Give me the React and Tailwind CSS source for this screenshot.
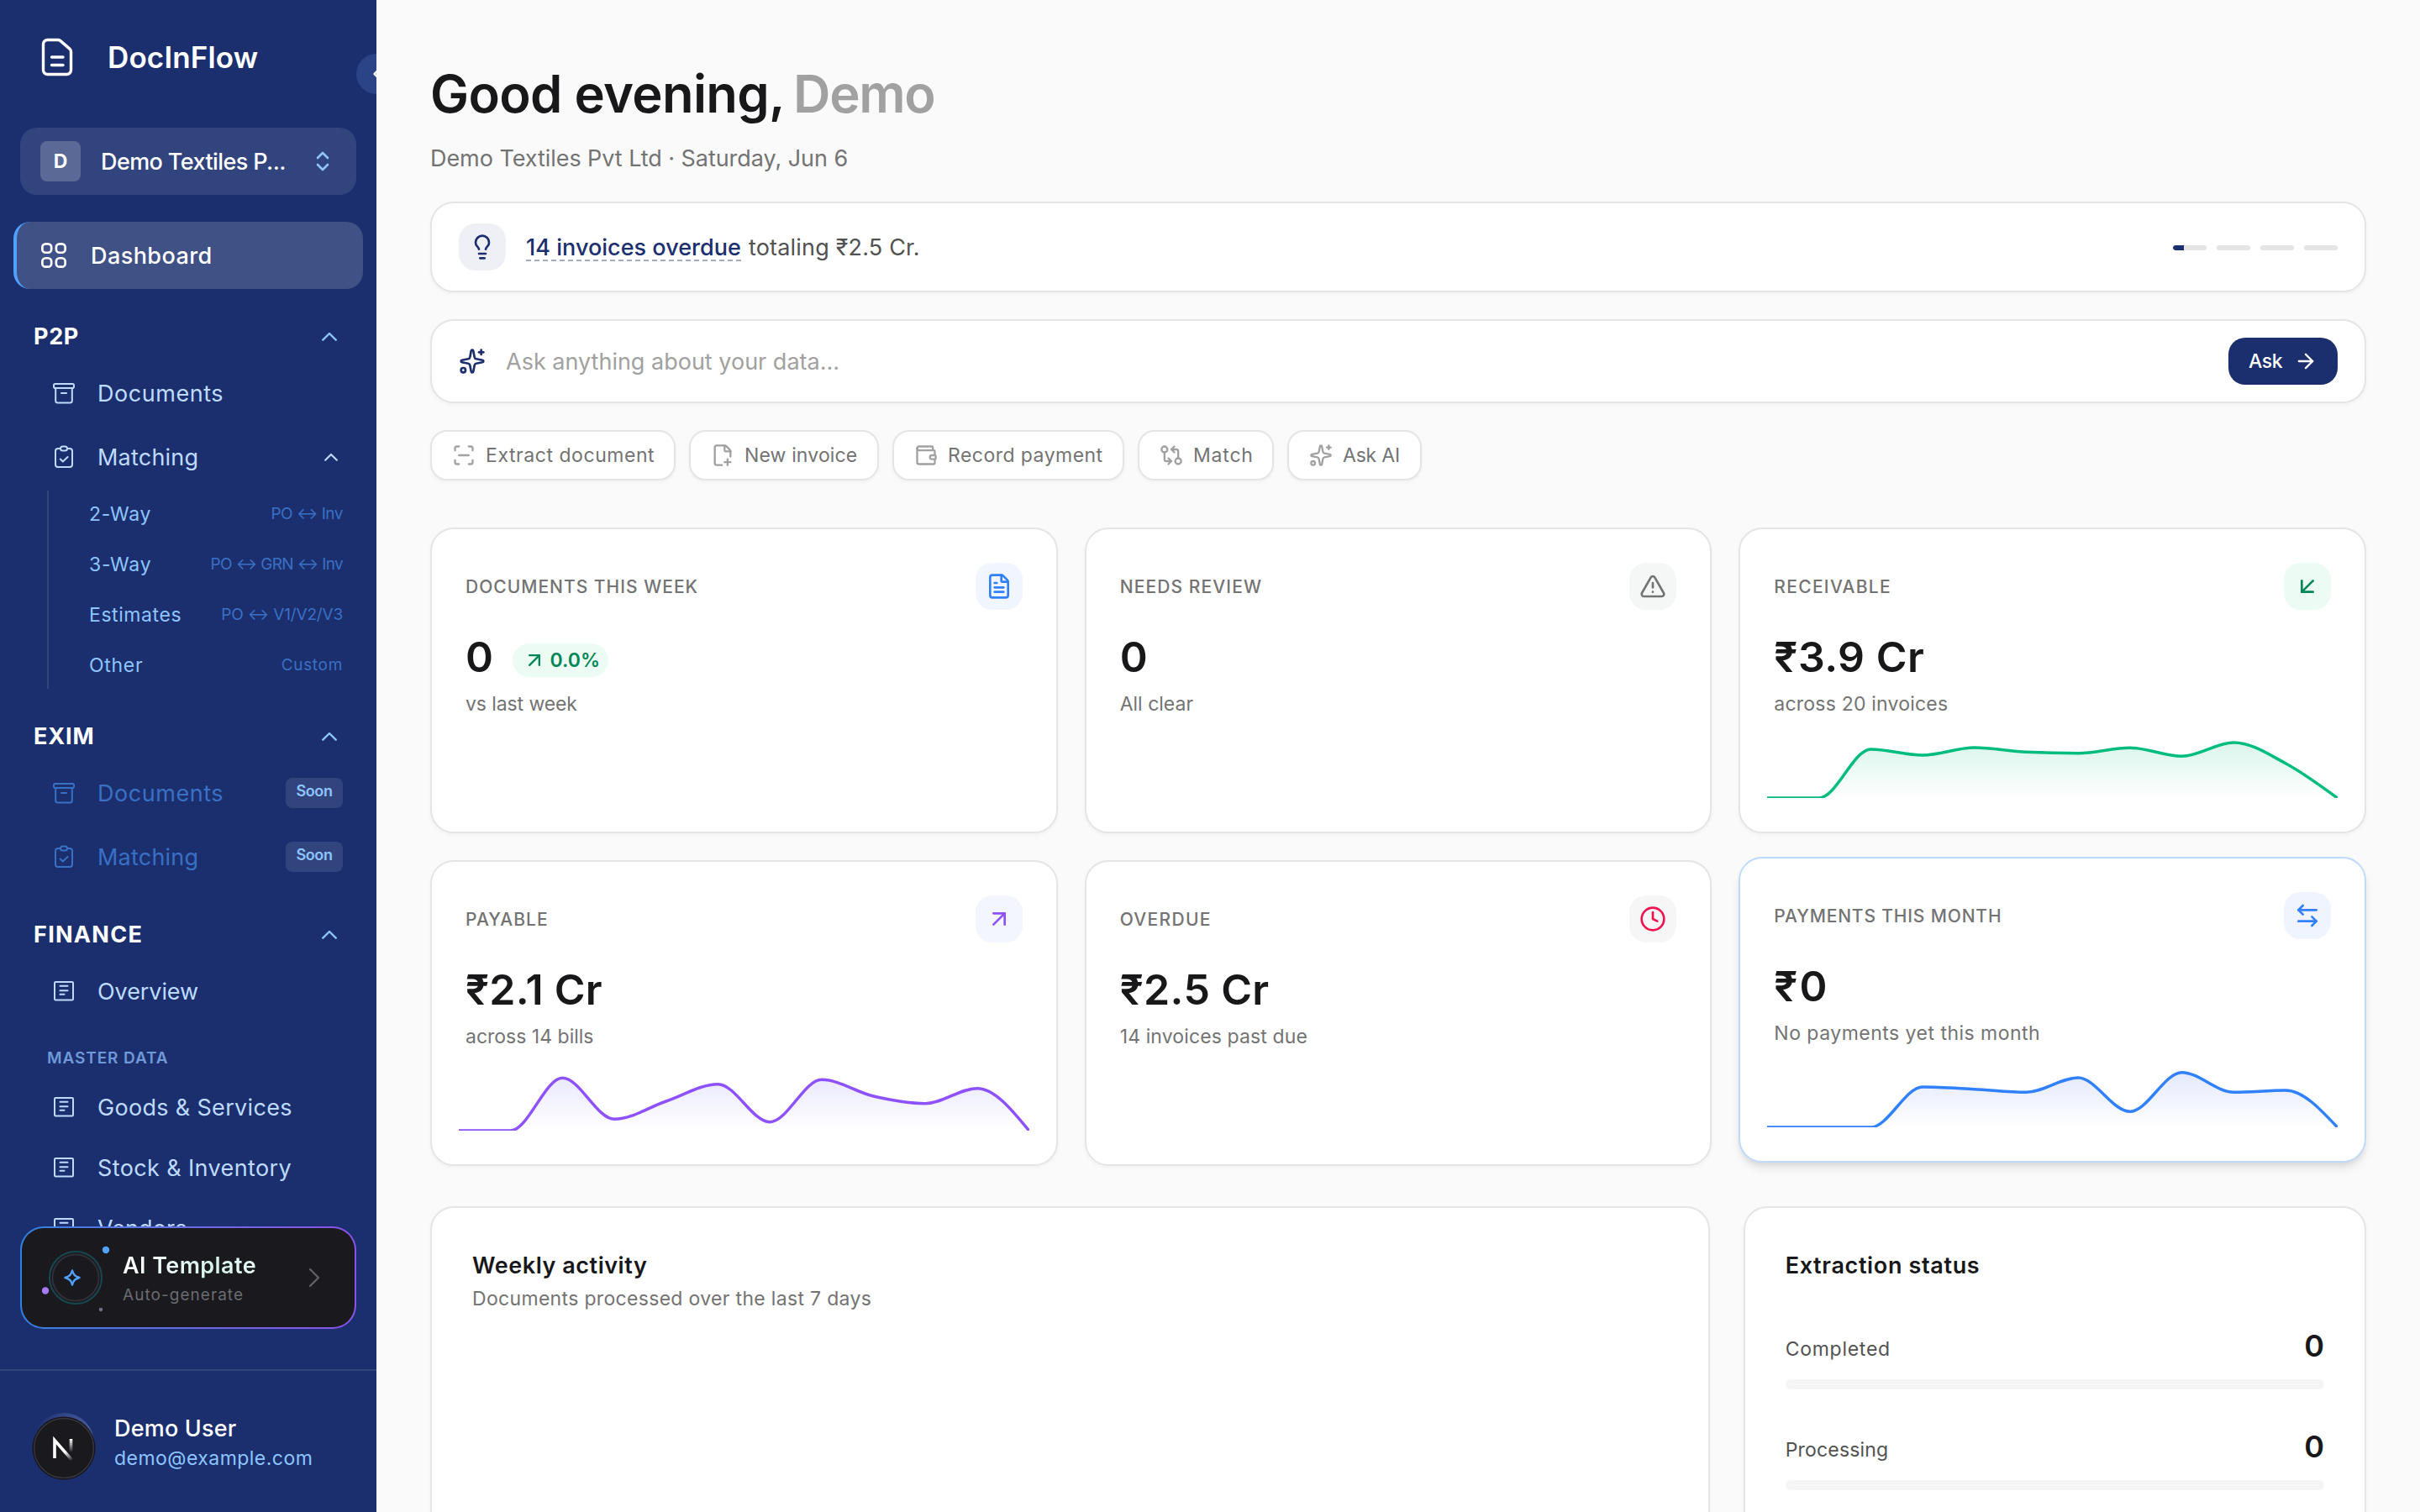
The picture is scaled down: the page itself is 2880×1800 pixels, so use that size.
import React from "react";
import {
  ArrowDownLeft,
  ArrowLeftRight,
  ArrowRight,
  ArrowUpRight,
  ChevronLeft,
  Clock,
  FileText,
  GitCompareArrows,
  Lightbulb,
  ScanLine,
  Sparkles,
  TriangleAlert,
  Wallet,
} from "lucide-react";

function LogoIcon() {
  return (
    <svg width="40" height="48" viewBox="0 0 40 48" fill="none" stroke="currentColor" strokeWidth="3.4" strokeLinecap="round" strokeLinejoin="round">
      <path d="M3.5 8.5a5 5 0 0 1 5-5h12.5a4 4 0 0 1 2.6.9l11.6 10a4 4 0 0 1 1.3 3V39.500a5 5 0 0 1-5 5h-23a5 5 0 0 1-5-5z" />
      <path d="M13.500 24h13.500M13.500 33.500h13.500" />
    </svg>
  );
}

function GridIcon() {
  return (
    <svg width="32" height="32" viewBox="0 0 32 32" fill="none" stroke="currentColor" strokeWidth="2.700">
      <rect x="2.350" y="2.350" width="10.800" height="10.400" rx="4" />
      <rect x="18.850" y="2.350" width="10.800" height="10.400" rx="4" />
      <rect x="2.350" y="19.250" width="10.800" height="10.400" rx="4" />
      <rect x="18.850" y="19.250" width="10.800" height="10.400" rx="4" />
    </svg>
  );
}

function ArchiveIcon() {
  return (
    <svg width="28" height="28" viewBox="0 0 28 28" fill="none" stroke="currentColor" strokeWidth="2" strokeLinecap="round" strokeLinejoin="round">
      <rect x="2" y="3" width="24" height="5" rx="1.800" />
      <path d="M4.200 8v15a2.500 2.500 0 0 0 2.500 2.500h14.600a2.500 2.500 0 0 0 2.500-2.500V8" />
      <path d="M11 14h6" />
    </svg>
  );
}

function ClipboardIcon() {
  return (
    <svg width="28" height="28" viewBox="0 0 28 28" fill="none" stroke="currentColor" strokeWidth="2" strokeLinecap="round" strokeLinejoin="round">
      <path d="M10 4H7a3 3 0 0 0-3 3v16a3 3 0 0 0 3 3h14a3 3 0 0 0 3-3V7a3 3 0 0 0-3-3h-3" />
      <rect x="10" y="1.500" width="8" height="5" rx="2.500" />
      <path d="m9.800 16.500 3 3 5.800-5.500" />
    </svg>
  );
}

function ListBoxIcon() {
  return (
    <svg width="28" height="28" viewBox="0 0 28 28" fill="none" stroke="currentColor" strokeWidth="2" strokeLinecap="round">
      <rect x="3" y="3" width="22" height="21.500" rx="1.200" />
      <path d="M9.500 7.800h9M9.500 13.200h9M9.500 17.800h5" />
    </svg>
  );
}

function ChevronUp({ className }) {
  return (
    <svg className={className} viewBox="0 0 18 11" fill="none" stroke="currentColor" strokeWidth="2.400" strokeLinecap="round" strokeLinejoin="round">
      <path d="M1.300 9.700 9 2l7.700 7.700" />
    </svg>
  );
}

function SortIcon() {
  return (
    <svg width="16" height="24" viewBox="0 0 16 24" fill="none" stroke="currentColor" strokeWidth="2.600" strokeLinecap="round" strokeLinejoin="round">
      <path d="m2 8 6-6 6 6M2 16l6 6 6-6" />
    </svg>
  );
}

function FilePlusIcon() {
  return (
    <svg width="28" height="28" viewBox="0 0 24 24" fill="none" stroke="currentColor" strokeWidth="2" strokeLinecap="round" strokeLinejoin="round">
      <path d="M11.350 22H6a2 2 0 0 1-2-2V4a2 2 0 0 1 2-2h8a2.400 2.400 0 0 1 1.706.706l3.588 3.588A2.400 2.400 0 0 1 20 8v5.350" />
      <path d="M14 2v5a1 1 0 0 0 1 1h5M14 19h6M17 16v6" />
    </svg>
  );
}

function SectionHeader({ title, className }) {
  return (
    <div className={`flex h-14 shrink-0 items-center justify-between pl-10 pr-[47px] ${className}`}>
      <span className="pt-0.5 text-[27px] font-bold text-white">{title}</span>
      <ChevronUp className="h-[11px] w-[18px] text-[#8ec5ff]" />
    </div>
  );
}

function NavItem({ icon, label, className, children }) {
  return (
    <div className={`flex shrink-0 items-center pl-[62px] pr-10 text-[27px] ${className}`}>
      {icon}
      <span className="ml-[26px] grow pt-0.5">{label}</span>
      {children}
    </div>
  );
}

function SoonBadge() {
  return (
    <span className="flex h-9 w-[68px] justify-center rounded-lg bg-white/10 pt-1 text-[18px] font-semibold leading-6 tracking-[-0.020em] text-[#8ec5ff]">
      Soon
    </span>
  );
}

const MATCH_MODES = [
  { name: "2-Way", hint: "PO ↔ Inv", tracking: "tracking-[0.032em]", hintTracking: "tracking-[-0.026em]" },
  { name: "3-Way", hint: "PO ↔ GRN ↔ Inv", tracking: "tracking-[0.032em]", hintTracking: "tracking-[-0.034em]" },
  { name: "Estimates", hint: "PO ↔ V1/V2/V3", tracking: "tracking-[0.025em]", hintTracking: "tracking-[-0.009em]" },
  { name: "Other", hint: "Custom", tracking: "tracking-[0.030em]", hintTracking: "tracking-[0.036em]" },
];

function Sidebar() {
  return (
    <aside className="relative flex h-[1800px] w-[448px] shrink-0 flex-col overflow-hidden bg-[#1b2f6e]">
      <div className="flex h-[136px] shrink-0 items-center pl-12 text-white">
        <LogoIcon />
        <span className="ml-[40px] text-[35px] font-semibold tracking-[0.004em]">DocInFlow</span>
      </div>
      <div className="absolute left-[424px] top-16 flex h-12 w-12 items-center justify-center rounded-full bg-[#2b4488] text-white">
        <ChevronLeft size={20} strokeWidth={2.800} />
      </div>

      <div className="mx-6 mt-4 flex h-20 shrink-0 items-center rounded-[20px] bg-white/10 pl-6 pr-8">
        <span className="flex h-12 w-12 items-center justify-center rounded-lg bg-white/20 text-[23px] font-bold text-white">D</span>
        <span className="ml-6 grow whitespace-nowrap pt-0.5 text-[27px] font-medium tracking-[-0.022em] text-white">Demo Textiles P...</span>
        <span className="text-[#8ec5ff]"><SortIcon /></span>
      </div>

      <nav className="mt-8 flex min-h-0 flex-1 flex-col overflow-hidden">
        <div className="mx-4 flex h-20 shrink-0 items-center rounded-[20px] border-l-4 border-[#51a2ff] bg-white/[0.165] pl-7 text-white">
          <GridIcon />
          <span className="ml-[28px] pt-0.5 text-[27px] font-medium tracking-[0.016em]">Dashboard</span>
        </div>

        <SectionHeader title="P2P" className="mt-7 tracking-[0.040em]" />
        <NavItem icon={<ArchiveIcon />} label="Documents" className="mt-0.5 h-[76px] tracking-[0.020em] text-[#bedbff]" />
        <NavItem icon={<ClipboardIcon />} label="Matching" className="h-[76px] tracking-[0.008em] text-[#bedbff]">
          <ChevronUp className="mr-1.5 h-[10px] w-4" />
        </NavItem>
        <div className="ml-14 mr-10 mt-0.5 flex shrink-0 flex-col gap-1 border-l-2 border-white/10 pl-12">
          {MATCH_MODES.map((m) => (
            <div key={m.name} className="flex h-14 items-center justify-between whitespace-nowrap">
              <span className={`text-[23px] text-[#8ec5ff] ${m.tracking}`}>{m.name}</span>
              <span className={`text-[19px] text-[#3a70c4] ${m.hintTracking}`}>{m.hint}</span>
            </div>
          ))}
        </div>

        <SectionHeader title="EXIM" className="mt-7 tracking-[0.055em]" />
        <NavItem icon={<ArchiveIcon />} label="Documents" className="mt-0.5 h-[76px] tracking-[0.020em] text-[#3a70c4]">
          <SoonBadge />
        </NavItem>
        <NavItem icon={<ClipboardIcon />} label="Matching" className="h-[76px] tracking-[0.008em] text-[#3a70c4]">
          <SoonBadge />
        </NavItem>

        <SectionHeader title="FINANCE" className="mt-[26px] tracking-[0.080em]" />
        <NavItem icon={<ListBoxIcon />} label="Overview" className="mt-0.5 h-[76px] tracking-[-0.003em] text-[#bedbff]" />
        <div className="mb-0.5 mt-[22px] flex h-10 shrink-0 items-center pl-14 text-[19px] font-semibold tracking-[0.048em] text-[#6f99d8]">
          MASTER DATA
        </div>
        <NavItem icon={<ListBoxIcon />} label="Goods & Services" className="h-[72px] tracking-[0.012em] text-[#bedbff]" />
        <NavItem icon={<ListBoxIcon />} label="Stock & Inventory" className="h-[72px] tracking-[0.014em] text-[#bedbff]" />
        <NavItem icon={<ListBoxIcon />} label="Vendors" className="h-[72px] tracking-[0.002em] text-[#bedbff]" />
      </nav>

      <div className="mx-6 h-[122px] shrink-0 rounded-[28px] bg-gradient-to-r from-[#3080e0] to-[#8a52e8] p-[2px]">
        <div className="flex h-full items-center rounded-[26px] bg-[#19191e] pl-6 pr-[41px]">
          <svg width="84" height="84" viewBox="0 0 84 84" fill="none">
            <circle cx="40" cy="42" r="31" stroke="#17484f" strokeWidth="2" />
            <circle cx="40" cy="42" r="27.500" stroke="#2f2f3a" strokeWidth="2" />
            <path d="M36 33.500c1.400 5 3.200 7 8.500 8.500-5.300 1.500-7.100 3.500-8.500 8.500-1.400-5-3.200-7-8.500-8.500 5.300-1.500 7.100-3.500 8.500-8.500z" stroke="#51a2ff" strokeWidth="2.400" strokeLinejoin="round" />
            <circle cx="76" cy="9" r="4.200" fill="#51a2ff" />
            <circle cx="4" cy="57.500" r="4.200" fill="#a47af5" />
            <circle cx="70" cy="80" r="2.200" fill="#6d7480" />
          </svg>
          <div className="ml-[12px] flex grow flex-col whitespace-nowrap pt-1.5">
            <span className="h-[34px] bg-gradient-to-r from-white via-[#d6f5ea] to-white bg-clip-text text-[27px] font-semibold leading-[34px] tracking-[0.015em] text-transparent">
              AI Template
            </span>
            <span className="h-[34px] text-[19px] leading-[36px] tracking-[0.055em] text-[#6b6b70]">Auto-generate</span>
          </div>
          <svg width="14" height="24" viewBox="0 0 14 24" fill="none" stroke="#606065" strokeWidth="2.400" strokeLinecap="round" strokeLinejoin="round">
            <path d="m2 2 10 10L2 22" />
          </svg>
        </div>
      </div>

      <div className="mt-12 flex h-[170px] shrink-0 items-center border-t-2 border-[#30437c] pl-10">
        <div className="relative mt-1 h-[72px] w-[72px] rounded-full bg-gradient-to-r from-[#1b2f6e] to-[#4a5ca0]">
          <svg className="absolute -left-0.5 top-1" width="76" height="76" viewBox="0 0 76 76" fill="none">
            <defs>
              <linearGradient id="diag" x1="34" y1="30" x2="49" y2="52" gradientUnits="userSpaceOnUse">
                <stop offset="0.500" stopColor="#fff" />
                <stop offset="1" stopColor="#fff" stopOpacity="0" />
              </linearGradient>
              <linearGradient id="stem" x1="46" y1="27" x2="46" y2="43" gradientUnits="userSpaceOnUse">
                <stop offset="0" stopColor="#fff" />
                <stop offset="1" stopColor="#fff" stopOpacity="0" />
              </linearGradient>
            </defs>
            <circle cx="38" cy="38" r="37.500" fill="#131316" />
            <circle cx="38" cy="38" r="35.500" fill="#1a1a1e" stroke="#35353c" strokeWidth="1.500" />
            <path d="M27 50V28.500L47.500 52" stroke="url(#diag)" strokeWidth="3.600" />
            <path d="M46.500 27v17" stroke="url(#stem)" strokeWidth="3.600" />
          </svg>
        </div>
        <div className="ml-6 flex flex-col whitespace-nowrap pt-1.5">
          <span className="h-9 text-[27px] font-medium leading-9 tracking-[0.007em] text-white">Demo User</span>
          <span className="h-9 text-[23px] leading-[35px] tracking-[0.020em] text-[#8ec5ff]">demo@example.com</span>
        </div>
      </div>
    </aside>
  );
}

/* Smooth path through evenly spaced points, without overshoot between them. */
function monotonePath(ys, width) {
  const h = width / (ys.length - 1);
  const d = ys.slice(1).map((y, i) => (y - ys[i]) / h);
  const last = ys.length - 1;
  const m = ys.map((_, i) => {
    if (i === 0 || i === last) return 0;
    const a = d[i - 1];
    const b = d[i];
    if (a * b <= 0) return 0;
    return Math.sign(a) * 2 * Math.min(Math.abs(a), Math.abs(b), Math.abs(a + b) / 4);
  });
  m[0] = (3 * d[0] - m[1]) / 2;
  m[last] = (3 * d[last - 1] - m[last - 1]) / 2;
  let path = `M0 ${ys[0]}`;
  for (let i = 0; i < last; i++) {
    const x0 = i * h;
    const x1 = x0 + h;
    path += `C${x0 + h / 3} ${ys[i] + (m[i] * h) / 3} ${x1 - h / 3} ${ys[i + 1] - (m[i + 1] * h) / 3} ${x1} ${ys[i + 1]}`;
  }
  return path;
}

function Sparkline({ id, points, color, fill }) {
  const width = 678.667;
  const line = monotonePath(points, width);
  return (
    <svg className="-mx-2 mt-6 block h-[72px] w-[calc(100%+16px)]" viewBox={`0 0 ${width} 72`} preserveAspectRatio="none" fill="none">
      <defs>
        <linearGradient id={id} x1="0" y1="0" x2="0" y2="72" gradientUnits="userSpaceOnUse">
          <stop offset="0" stopColor={fill} stopOpacity="0.160" />
          <stop offset="1" stopColor={fill} stopOpacity="0" />
        </linearGradient>
      </defs>
      <path d={`${line}L${width} 72L0 72Z`} fill={`url(#${id})`} />
      <path d={line} stroke={color} strokeWidth="3.500" />
    </svg>
  );
}

function StatCard({ label, labelTracking, value, valueTracking, sub, subTracking, icon, iconBox, badge, chart, highlighted }) {
  return (
    <div
      className={`h-[364px] rounded-[28px] border-2 bg-white p-10 ${
        highlighted
          ? "-translate-y-1 border-[#bedbff] shadow-[0_8px_12px_-2px_rgba(0,0,0,0.1),0_4px_8px_-4px_rgba(0,0,0,0.1)]"
          : "border-[#e5e5e5] shadow-[0_2px_4px_rgba(0,0,0,0.04)]"
      }`}
    >
      <div className="flex h-14 items-center justify-between">
        <span className={`pt-0.5 text-[21px] font-medium text-[#737373] ${labelTracking}`}>{label}</span>
        <span className={`flex h-14 w-14 items-center justify-center rounded-[20px] ${iconBox}`}>{icon}</span>
      </div>
      <div className="mt-7 flex h-14 items-center gap-[22px]">
        <span className={`text-[50px] font-semibold leading-[56px] text-[#18181b] ${valueTracking}`}>{value}</span>
        {badge}
      </div>
      <div className={`mt-3 h-8 text-[23px] leading-8 text-[#737373] ${subTracking}`}>{sub}</div>
      {chart}
    </div>
  );
}

function StatusRow({ label, tracking }) {
  return (
    <div className="h-[120px]">
      <div className="flex h-10 items-center justify-between">
        <span className={`pt-2 text-[23px] text-[#525252] ${tracking}`}>{label}</span>
        <span className="text-[36px] font-semibold leading-[38px] text-[#18181b]">0</span>
      </div>
      <div className="mt-5 h-3 rounded-full bg-[#f5f5f5]" />
    </div>
  );
}

const CHIPS = [
  { label: "Extract document", icon: <ScanLine size={28} strokeWidth={2} />, width: "w-[292px]", tracking: "tracking-[0.024em]" },
  { label: "New invoice", icon: <FilePlusIcon />, width: "w-[226px]", tracking: "tracking-[0.006em]" },
  { label: "Record payment", icon: <Wallet size={28} strokeWidth={2} />, width: "w-[276px]", tracking: "tracking-[0.020em]" },
  { label: "Match", icon: <GitCompareArrows size={28} strokeWidth={2} />, width: "w-[162px]", tracking: "tracking-[0.035em]" },
  { label: "Ask AI", icon: <Sparkles size={28} strokeWidth={2} />, width: "w-[160px]", tracking: "tracking-[-0.009em]" },
];

const PANEL = "border-2 border-[#e5e5e5] bg-white shadow-[0_2px_4px_rgba(0,0,0,0.04)]";

export default function App() {
  return (
    <div className="flex h-[1800px] w-[2880px] overflow-hidden bg-[#fafafa] font-['Inter',sans-serif]">
      <Sidebar />
      <main className="flex min-w-0 flex-1 flex-col px-16 pt-[72px]">
        <h1 className="h-20 whitespace-nowrap text-[61.500px] font-semibold leading-[80px] tracking-[-0.011em] text-[#18181b]">
          Good evening,<span className="ml-[10px] tracking-[-0.021em] text-[#a1a1a1]">Demo</span>
        </h1>
        <p className="mt-4 h-10 text-[27px] leading-[42px] tracking-[-0.002em] text-[#737373]">Demo Textiles Pvt Ltd · Saturday, Jun 6</p>

        <section className={`mt-8 flex h-[108px] shrink-0 items-center rounded-[28px] px-8 ${PANEL}`}>
          <span className="flex h-14 w-14 items-center justify-center rounded-[20px] bg-[#eef0f6] text-[#1b2f6e]">
            <Lightbulb size={32} strokeWidth={2} />
          </span>
          <p className="ml-6 flex h-[34px] grow whitespace-nowrap text-[27px] leading-[35px] text-[#525252]">
            <span className="h-[34px] border-b-2 border-dashed border-[#a4acc5] font-medium tracking-[0.001em] text-[#1b2f6e]">14 invoices overdue</span>
            <span className="ml-[9px] tracking-[0.007em]">totaling ₹2.5 Cr.</span>
          </p>
          <div className="mt-0.5 flex gap-3">
            <span className="h-1.5 w-10 overflow-hidden rounded-full bg-[#e5e5e5]">
              <span className="block h-1.5 w-[13px] rounded-l-full bg-[#1b2f6e]" />
            </span>
            <span className="h-1.5 w-10 rounded-full bg-[#e5e5e5]" />
            <span className="h-1.5 w-10 rounded-full bg-[#e5e5e5]" />
            <span className="h-1.5 w-10 rounded-full bg-[#e5e5e5]" />
          </div>
        </section>

        <section className={`mt-8 flex h-[100px] shrink-0 items-center rounded-[28px] px-8 ${PANEL}`}>
          <Sparkles size={32} className="text-[#1b2f6e]" />
          <span className="ml-6 grow pt-0.5 text-[27px] text-[#a1a1a1]">Ask anything about your data...</span>
          <button className="flex h-14 w-[130px] items-center rounded-[20px] bg-[#1b2f6e] pl-6 text-[23px] font-medium tracking-[-0.020em] text-white">
            Ask
            <ArrowRight className="ml-[14px]" size={28} />
          </button>
        </section>

        <div className="mt-8 flex h-[60px] shrink-0 gap-4">
          {CHIPS.map((c) => (
            <button key={c.label} className={`flex h-[60px] items-center rounded-[20px] pl-6 text-[#a1a1a1] ${PANEL} ${c.width}`}>
              {c.icon}
              <span className={`ml-3 whitespace-nowrap text-[23px] text-[#737373] ${c.tracking}`}>{c.label}</span>
            </button>
          ))}
        </div>

        <div className="mt-14 grid grid-cols-3 gap-8">
          <StatCard
            label="DOCUMENTS THIS WEEK"
            labelTracking="tracking-[0.048em]"
            value="0"
            valueTracking="tracking-[0.030em]"
            sub="vs last week"
            subTracking="tracking-[-0.004em]"
            iconBox="bg-[#f0f5ff] text-[#3080ff]"
            icon={<FileText size={32} />}
            badge={
              <span className="mt-2 flex h-10 w-[114px] items-center rounded-[20px] bg-[#ecfcf5] pl-3 text-[23px] font-semibold text-[#008758]">
                <ArrowUpRight size={28} strokeWidth={2} />
                <span className="ml-1">0.0%</span>
              </span>
            }
          />
          <StatCard
            label="NEEDS REVIEW"
            labelTracking="tracking-[0.053em]"
            value="0"
            valueTracking="tracking-normal"
            sub="All clear"
            subTracking="tracking-normal"
            iconBox="bg-[#f5f6f6] text-[#737373]"
            icon={<TriangleAlert size={32} strokeWidth={2} />}
          />
          <StatCard
            label="RECEIVABLE"
            labelTracking="tracking-[0.062em]"
            value="₹3.9 Cr"
            valueTracking="tracking-[0.010em]"
            sub="across 20 invoices"
            subTracking="tracking-[0.009em]"
            iconBox="bg-[#ecfcf5] text-[#008758]"
            icon={<ArrowDownLeft size={32} />}
            chart={<Sparkline id="receivable" color="#00bc7d" fill="#00bc7d" points={[72, 72, 14, 21, 12, 17.3, 18.7, 12.3, 22.3, 6, 30.7, 72]} />}
          />
          <StatCard
            label="PAYABLE"
            labelTracking="tracking-[0.049em]"
            value="₹2.1 Cr"
            valueTracking="tracking-[0.005em]"
            sub="across 14 bills"
            subTracking="tracking-normal"
            iconBox="bg-[#f3f5ff] text-[#8e51ff]"
            icon={<ArrowUpRight size={32} />}
            chart={<Sparkline id="payable" color="#8e51ff" fill="#6a62ff" points={[72, 72, 9.300, 58.300, 37, 16.700, 61.700, 11.300, 31, 39.700, 21.700, 72]} />}
          />
          <StatCard
            label="OVERDUE"
            labelTracking="tracking-[0.063em]"
            value="₹2.5 Cr"
            valueTracking="tracking-[0.007em]"
            sub="14 invoices past due"
            subTracking="tracking-[0.005em]"
            iconBox="bg-[#f6f6f7] text-[#ee1450]"
            icon={<Clock size={32} />}
          />
          <StatCard
            highlighted
            label="PAYMENTS THIS MONTH"
            labelTracking="tracking-[0.040em]"
            value="₹0"
            valueTracking="tracking-[0.040em]"
            sub="No payments yet this month"
            subTracking="tracking-[0.021em]"
            iconBox="bg-[#f0f4ff] text-[#3080ff]"
            icon={<ArrowLeftRight size={32} />}
            chart={<Sparkline id="payments" color="#3080ff" fill="#4069ee" points={[72, 72, 72, 24, 26.700, 30.300, 13, 53.300, 6.700, 30.300, 28, 72]} />}
          />
        </div>

        <div className="mt-12 grid grid-cols-3 gap-10">
          <section className={`col-span-2 h-[560px] rounded-[28px] px-12 pt-12 ${PANEL}`}>
            <h2 className="h-10 text-[27px] font-semibold leading-[42px] tracking-[0.020em] text-[#18181b]">Weekly activity</h2>
            <p className="h-10 text-[23px] leading-10 tracking-[0.014em] text-[#737373]">Documents processed over the last 7 days</p>
          </section>
          <section className={`h-[560px] rounded-[28px] px-12 pt-12 ${PANEL}`}>
            <h2 className="h-10 text-[27px] font-semibold leading-[42px] tracking-[0.024em] text-[#18181b]">Extraction status</h2>
            <div className="mt-14">
              <StatusRow label="Completed" tracking="tracking-[0.032em]" />
              <StatusRow label="Processing" tracking="tracking-[0.008em]" />
            </div>
          </section>
        </div>
      </main>
    </div>
  );
}
